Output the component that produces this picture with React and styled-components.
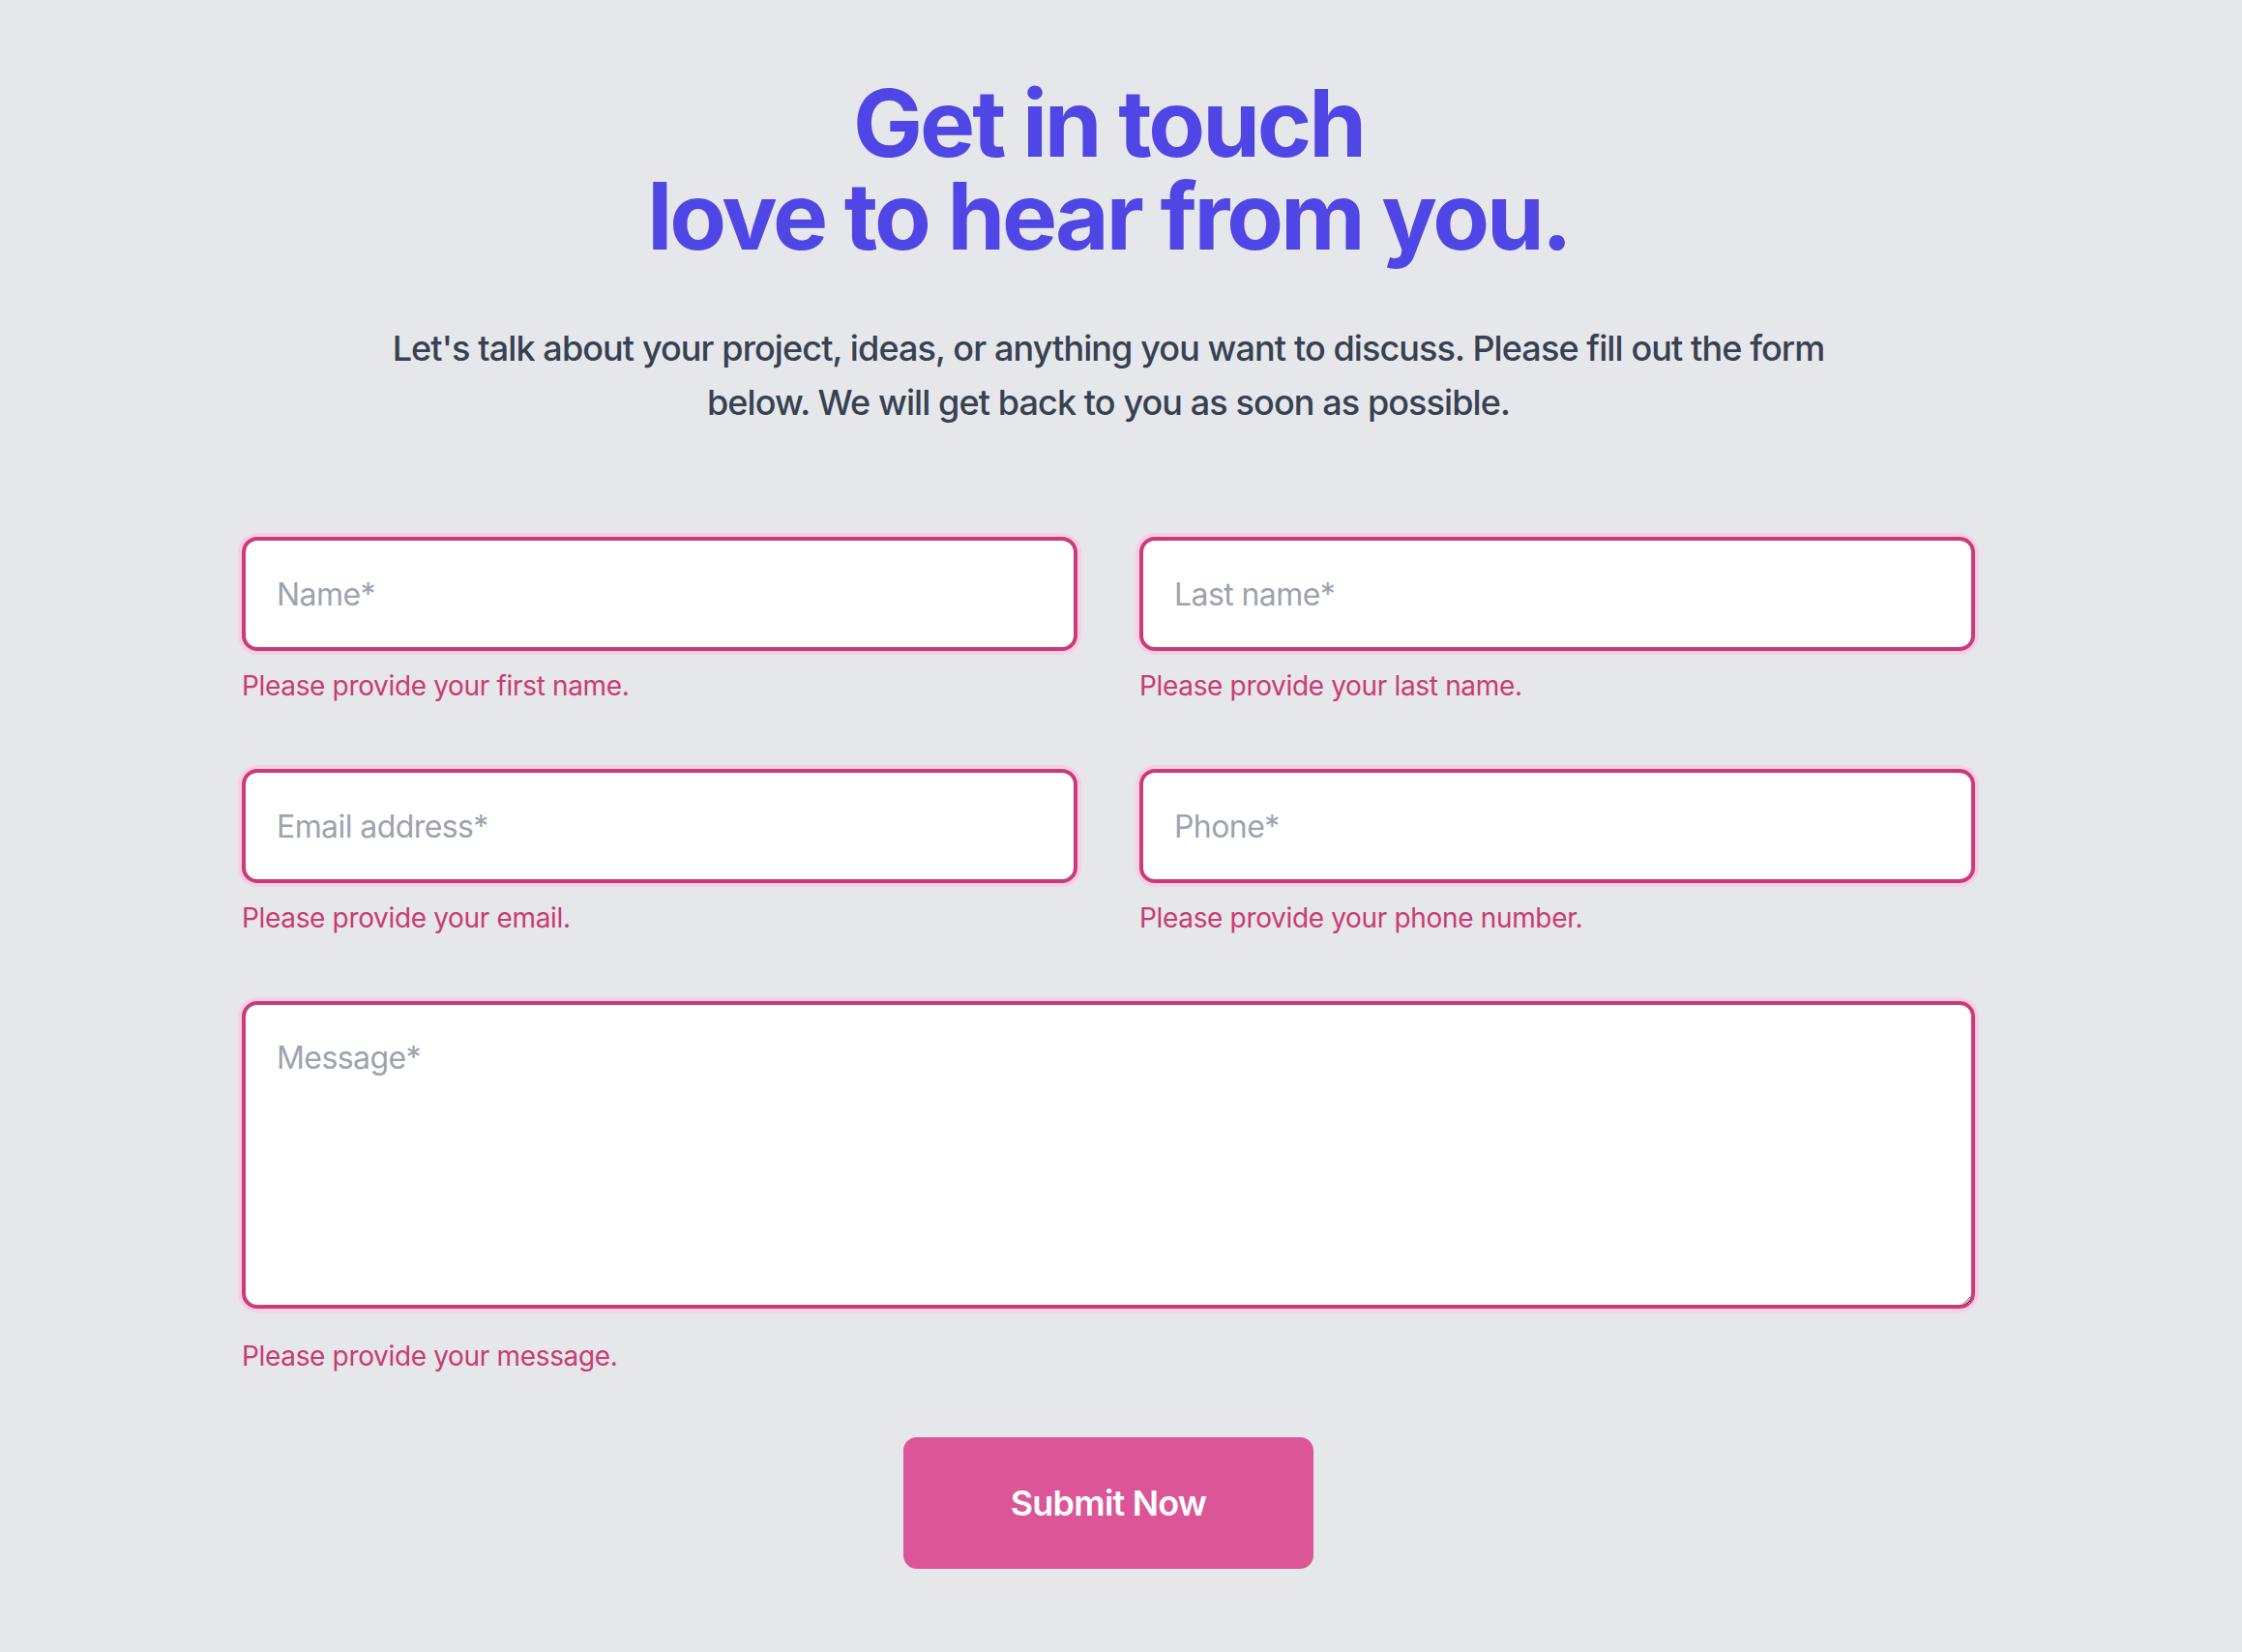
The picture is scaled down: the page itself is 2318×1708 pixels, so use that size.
import styled, { createGlobalStyle } from "styled-components";

const GlobalStyle = createGlobalStyle`
    body {
        margin: 0;
        background-color: #e5e7eb;
        font-family: Inter, "Noto Sans", sans-serif;
    }
`;

const Page = styled.main`
    padding: 79px 26px 86px 0;
`;

const Header = styled.header`
    text-align: center;
`;

const Title = styled.h1`
    margin: 0;
    font-size: 96px;
    line-height: 1;
    font-weight: 700;
    letter-spacing: -0.032em;
    color: #4f46e5;
`;

const Lead = styled.p`
    max-width: 1536px;
    margin: 61px auto 0;
    font-size: 36px;
    line-height: 56px;
    font-weight: 500;
    letter-spacing: -0.025em;
    color: #374151;
`;

const Form = styled.form`
    max-width: 1792px;
    margin: 111px auto 0;
    display: flex;
    flex-direction: column;
    align-items: center;
`;

const Grid = styled.div`
    width: 100%;
    display: grid;
    grid-template-columns: 1fr 1fr;
    column-gap: 64px;
    row-gap: 66px;
`;

const Field = styled.div`
    display: flex;
    flex-direction: column;
    grid-column: ${p => (p.$wide ? "1 / -1" : "auto")};
`;

const fieldLook = `
    box-sizing: border-box;
    width: 100%;
    border: 4px solid #cc3a78;
    border-radius: 16px;
    background: #fff;
    box-shadow: 0 0 0 4px #f6d0e5;
    font-family: Inter, "Noto Sans", sans-serif;
    font-size: 32px;
    line-height: 48px;
    letter-spacing: -0.018em;
    color: #111827;
    outline: none;
    &::placeholder {
        color: #9ca3af;
    }
`;

const Input = styled.input`
    ${fieldLook}
    height: 118px;
    padding: 0 32px;
`;

const TextArea = styled.textarea`
    ${fieldLook}
    display: block;
    height: 318px;
    padding: 31px 32px;
    resize: vertical;
`;

const Error = styled.p`
    margin: ${p => (p.$spaced ? "29px" : "16px")} 0 0;
    font-size: 28px;
    line-height: 40px;
    letter-spacing: -0.012em;
    color: #cb3a72;
`;

const Submit = styled.button`
    margin-top: 64px;
    width: 424px;
    height: 136px;
    border: 0;
    border-radius: 14px;
    background-color: #db5597;
    color: #fff;
    font-family: Inter, "Noto Sans", sans-serif;
    font-size: 36px;
    font-weight: 600;
    letter-spacing: -0.022em;
    cursor: pointer;
`;

const fields = [
    { placeholder: "Name*", error: "Please provide your first name." },
    { placeholder: "Last name*", error: "Please provide your last name." },
    { placeholder: "Email address*", error: "Please provide your email.", type: "email" },
    { placeholder: "Phone*", error: "Please provide your phone number.", type: "tel" },
];

export default function App() {
    return <Page>
        <GlobalStyle/>
        <Header>
            <Title>Get in touch<br/>love to hear from you.</Title>
            <Lead>
                Let's talk about your project, ideas, or anything you want to discuss. Please fill out the form below. We will get back to you as soon as possible.
            </Lead>
        </Header>
        <Form onSubmit={e => e.preventDefault()}>
            <Grid>
                {fields.map(f => (
                    <Field key={f.placeholder}>
                        <Input type={f.type || "text"} placeholder={f.placeholder}/>
                        <Error>{f.error}</Error>
                    </Field>
                ))}
                <Field $wide>
                    <TextArea placeholder="Message*"/>
                    <Error $spaced>Please provide your message.</Error>
                </Field>
            </Grid>
            <Submit type="submit">Submit Now</Submit>
        </Form>
    </Page>;
}
